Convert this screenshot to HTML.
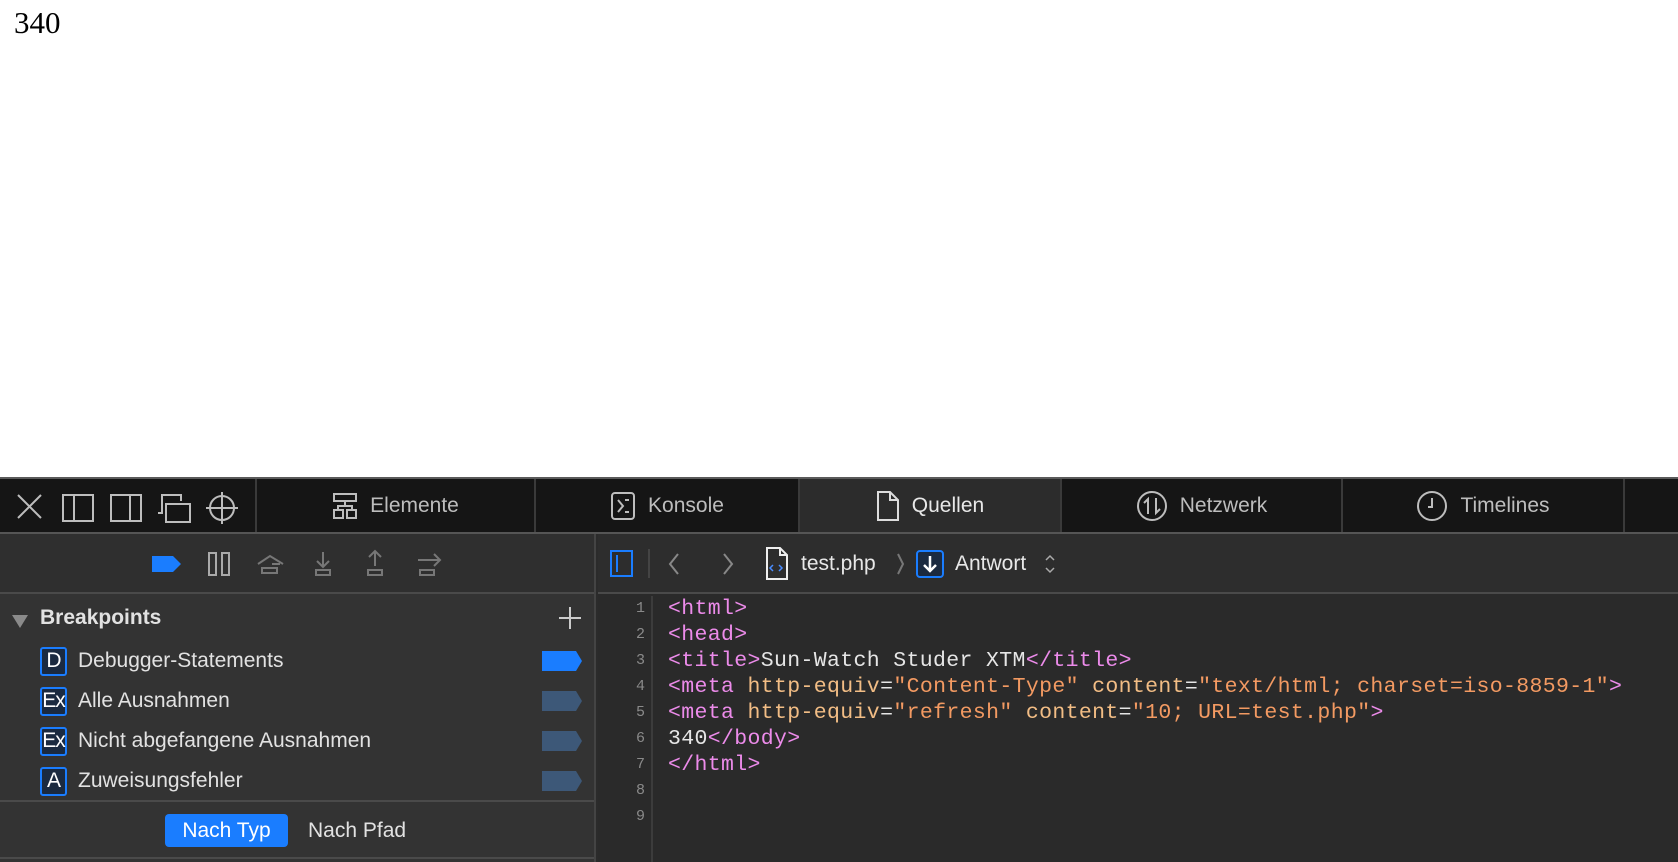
<!DOCTYPE html>
<html style="width:1678px;height:862px;overflow:hidden"><head><meta charset="utf-8"><style>
*{box-sizing:border-box;margin:0;padding:0}
body{width:1678px;height:862px;background:#fff;position:relative;overflow:hidden;font-family:"Liberation Sans",sans-serif}
.num{position:absolute;left:14px;top:5px;font:31px "Liberation Serif",serif;color:#000}
.dt{position:absolute;left:0;top:477px;width:1678px;height:385px;background:#2b2b2b;border-top:2px solid #5a5a5a;overflow:hidden}
.tabs{position:absolute;left:0;top:0;width:1678px;height:55px;background:#151515;border-bottom:2px solid #555}
.tab{position:absolute;top:0;height:53px;border-left:2px solid #3a3a3a;color:#bdbdbd;font-size:21px;display:flex;align-items:center;justify-content:center;gap:12px}
.tab.sel{background:#2c2c2c;color:#e8e8e8}
.side{position:absolute;left:0;top:55px;width:596px;height:330px;background:#333;border-right:2px solid #444}
.tb{position:absolute;left:0;top:0;width:100%;height:60px;border-bottom:2px solid #4a4a4a;background:#2f2f2f}
.code{position:absolute;left:598px;top:55px;right:0;height:330px;background:#2a2a2a;overflow:hidden}
.ctb{position:absolute;left:0;top:0;width:100%;height:60px;border-bottom:2px solid #4a4a4a;background:#2d2d2d}
.gut{position:absolute;left:0;top:62px;width:55px;height:268px;border-right:2px solid #3c3c3c;color:#8a8a8a;font:15px "Liberation Mono",monospace;text-align:right;padding-right:6px;line-height:26px;padding-top:0px}
.lines{position:absolute;left:70px;top:62px;font:21.5px "Liberation Mono",monospace;line-height:26px;color:#e6e6e6;padding-top:0px;white-space:pre;letter-spacing:0.35px}
.t{color:#ec8bea}.a{color:#f2bd85}.s{color:#f39a62}
.row{position:absolute;left:40px;height:30px;display:flex;align-items:center;color:#e2e2e2;font-size:21px}
.ic{width:27px;height:29px;border:2px solid #1a7dff;background:#1b2a40;border-radius:3px;color:#fff;font-size:21px;display:flex;align-items:center;justify-content:center;margin-right:11px;font-weight:500;letter-spacing:-1px}
.flag{position:absolute;left:542px;width:40px;height:20px;background:#3d5878;clip-path:polygon(0 0,85% 0,100% 50%,85% 100%,0 100%)}
</style></head><body>
<div class="num">340</div>
<div class="dt">
 <div class="tabs">
  <svg style="position:absolute;left:0;top:0" width="255" height="53" fill="none" stroke="#bdbdbd" stroke-width="2">
   <path d="M18 16L41 39M41 16L18 39"/>
   <rect x="63" y="16" width="30" height="26"/><path d="M74 16V42"/>
   <rect x="111" y="16" width="30" height="26"/><path d="M130 16V42"/>
   <path d="M158 34H162V16H181V22"/><rect x="166" y="25" width="24" height="18"/>
   <circle cx="222" cy="29" r="12"/><path d="M222 13V45M206 29H238"/>
  </svg>
  <div class="tab" style="left:255px;width:279px">
   <svg width="26" height="28" fill="none" stroke="#bdbdbd" stroke-width="2"><rect x="2" y="2" width="22" height="7"/><rect x="2" y="18" width="9" height="8"/><rect x="15" y="18" width="9" height="8"/><path d="M13 9V14M6 18V14H20V18"/></svg>Elemente</div>
  <div class="tab" style="left:534px;width:264px">
   <svg width="26" height="30" fill="none" stroke="#bdbdbd" stroke-width="2"><rect x="2" y="2" width="22" height="26" rx="3"/><path d="M8 9L13 15L8 21M15 9H19M15 21H19"/></svg>Konsole</div>
  <div class="tab sel" style="left:798px;width:262px">
   <svg width="24" height="32" fill="none" stroke="#ddd" stroke-width="2"><path d="M2 2H14L22 10V30H2Z M14 2V10H22"/></svg>Quellen</div>
  <div class="tab" style="left:1060px;width:281px">
   <svg width="32" height="32" fill="none" stroke="#bdbdbd" stroke-width="2"><circle cx="16" cy="16" r="14"/><path d="M12 24V9L8 13M20 8V23L24 19"/></svg>Netzwerk</div>
  <div class="tab" style="left:1341px;width:282px">
   <svg width="32" height="32" fill="none" stroke="#bdbdbd" stroke-width="2"><circle cx="16" cy="16" r="14"/><path d="M16 8V17H12"/></svg>Timelines</div>
  <div class="tab" style="left:1623px;width:55px"></div>
 </div>
 <div class="side">
  <div class="tb">
   <svg width="596" height="60" fill="none" stroke-width="2">
    <path d="M152 22H173L181 30L173 38H152Z" fill="#1a7dff" stroke="none"/>
    <rect x="209" y="19" width="7" height="22" stroke="#aaa"/><rect x="222" y="19" width="7" height="22" stroke="#aaa"/>
    <path d="M258 30L270 22L283 30M272 30H280" stroke="#777"/><rect x="262" y="34" width="15" height="5" stroke="#777"/>
    <path d="M323 18V32M317 27L323 33L329 27" stroke="#777"/><rect x="316" y="36" width="14" height="5" stroke="#777"/>
    <path d="M375 32V18M369 23L375 17L381 23" stroke="#777"/><rect x="368" y="36" width="14" height="5" stroke="#777"/>
    <path d="M418 26H440M434 20L440 26L434 32" stroke="#777"/><rect x="420" y="36" width="14" height="5" stroke="#777"/>
   </svg>
  </div>
  <svg style="position:absolute;left:10px;top:79px" width="20" height="16"><path d="M2 2H18L10 15Z" fill="#8a8a8a"/></svg>
  <div style="position:absolute;left:40px;top:72px;color:#e2e2e2;font-weight:bold;font-size:21px">Breakpoints</div>
  <svg style="position:absolute;left:558px;top:72px" width="24" height="24" stroke="#ccc" stroke-width="2"><path d="M12 1V23M1 12H23"/></svg>
  <div class="row" style="top:112px"><div class="ic">D</div>Debugger-Statements</div>
  <div class="flag" style="top:117px;background:#1a7dff"></div>
  <div class="row" style="top:152px"><div class="ic">Ex</div>Alle Ausnahmen</div>
  <div class="flag" style="top:157px"></div>
  <div class="row" style="top:192px"><div class="ic">Ex</div>Nicht abgefangene Ausnahmen</div>
  <div class="flag" style="top:197px"></div>
  <div class="row" style="top:232px"><div class="ic">A</div>Zuweisungsfehler</div>
  <div class="flag" style="top:237px"></div>
  <div style="position:absolute;left:0;top:266px;width:100%;border-top:2px solid #4a4a4a"></div>
  <div style="position:absolute;left:165px;top:280px;width:123px;height:33px;background:#1a7dff;border-radius:4px;color:#fff;font-size:21px;text-align:center;line-height:33px">Nach Typ</div>
  <div style="position:absolute;left:308px;top:280px;color:#e2e2e2;font-size:21px;line-height:33px">Nach Pfad</div>
  <div style="position:absolute;left:0;top:323px;width:100%;border-top:2px solid #4a4a4a"></div>
 </div>
 <div class="code">
  <div class="ctb">
   <svg width="500" height="60" fill="none" stroke-width="2">
    <rect x="13" y="17" width="21" height="25" stroke="#1a7dff"/><path d="M19 21V38" stroke="#1a7dff"/>
    <path d="M51 15V44" stroke="#444"/>
    <path d="M80 20L72 30L80 40" stroke="#888"/><path d="M126 20L134 30L126 40" stroke="#888"/>
    <path d="M169 14H182L189 21V45H169Z M182 14V21H189" stroke="#eee"/><path d="M175 31L172 34L175 37M181 31L184 34L181 37" stroke="#4a8cff" stroke-width="1.5"/>
    <path d="M300 20L305 30L300 40" stroke="#777"/>
    <rect x="319" y="17" width="26" height="26" rx="3" fill="#1b2a40" stroke="#1a7dff"/><path d="M332 22V37M326 31L332 37L338 31" stroke="#fff" stroke-width="2.5"/>
    <path d="M448 26L452 22L456 26M448 34L452 38L456 34" stroke="#aaa" stroke-width="1.5"/>
   </svg>
   <div style="position:absolute;left:203px;top:18px;color:#e8e8e8;font-size:21px">test.php</div>
   <div style="position:absolute;left:357px;top:18px;color:#e8e8e8;font-size:21px">Antwort</div>
  </div>
  <div class="gut">1<br>2<br>3<br>4<br>5<br>6<br>7<br>8<br>9</div>
  <div class="lines"><span class="t">&lt;html&gt;</span>
<span class="t">&lt;head&gt;</span>
<span class="t">&lt;title&gt;</span>Sun-Watch Studer XTM<span class="t">&lt;/title&gt;</span>
<span class="t">&lt;meta</span> <span class="a">http-equiv</span>=<span class="s">"Content-Type"</span> <span class="a">content</span>=<span class="s">"text/html; charset=iso-8859-1"</span><span class="t">&gt;</span>
<span class="t">&lt;meta</span> <span class="a">http-equiv</span>=<span class="s">"refresh"</span> <span class="a">content</span>=<span class="s">"10; URL=test.php"</span><span class="t">&gt;</span>
340<span class="t">&lt;/body&gt;</span>
<span class="t">&lt;/html&gt;</span></div>
 </div>
</div>
</body></html>
